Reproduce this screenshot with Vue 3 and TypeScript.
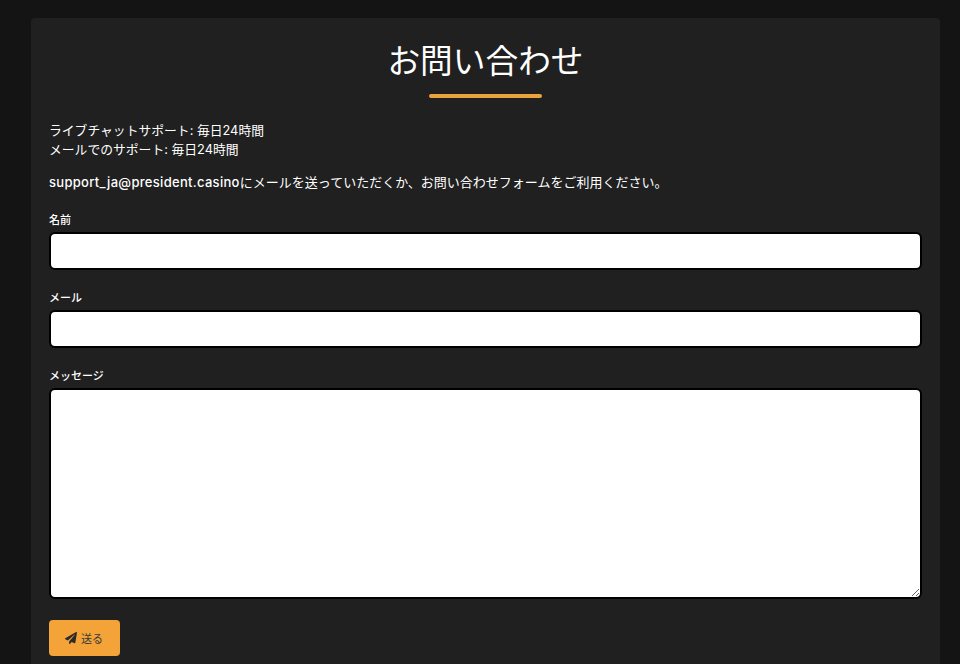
<script setup lang="ts">
const introLines: string[] = ['ライブチャットサポート: 毎日24時間', 'メールでのサポート: 毎日24時間']
</script>

<template>
  <main class="page">
    <section class="card">
      <h1 class="title">お問い合わせ</h1>
      <div class="rule"></div>
      <p class="intro">
        <template v-for="line in introLines" :key="line">{{ line }}<br /></template>
      </p>
      <p class="mailline"><span class="addr">support_ja@president.casino</span>にメールを送っていただくか、お問い合わせフォームをご利用ください。</p>
      <form class="form" @submit.prevent>
        <label class="field">
          <span class="label">名前</span>
          <input class="control input" type="text" />
        </label>
        <label class="field">
          <span class="label">メール</span>
          <input class="control input" type="email" />
        </label>
        <label class="field">
          <span class="label">メッセージ</span>
          <textarea class="control area"></textarea>
        </label>
        <button class="send" type="submit">
          <svg class="plane" viewBox="0 0 512 512" aria-hidden="true">
            <path d="M476 3.2 12.5 270.6c-18.1 10.400-15.800 35.600 2.200 43.200L121 358.400l287.300-253.200c5.500-4.900 13.300 2.600 8.600 8.300L176 407v80.500c0 23.600 28.500 32.900 42.500 15.800L282 426l124.600 52.200c14.200 6 30.400-2.900 33-18.200l72-432C515 7.800 493.300-6.800 476 3.200z" />
          </svg>
          <span>送る</span>
        </button>
      </form>
    </section>
  </main>
</template>

<style scoped>
.page {
  box-sizing: border-box;
  width: 960px;
  height: 664px;
  overflow: hidden;
  padding: 18px 20px 0 31px;
  background: #141414;
  font-family: "Inter", "Noto Sans CJK JP", sans-serif;
}
.card {
  box-sizing: border-box;
  width: 909px;
  height: 700px;
  padding: 16px 18px 0;
  background: #202020;
  border-radius: 4px 4px 0 0;
  color: #fff;
}
.title {
  margin: 0;
  height: 52px;
  font-size: 32.7px;
  line-height: 50px;
  font-weight: 400;
  text-align: center;
  font-family: "Noto Sans CJK JP", sans-serif;
}
.rule {
  width: 113px;
  height: 4px;
  margin: 8px auto 0;
  background: #eba33c;
  border-radius: 2px;
}
.intro {
  margin: 23px 0 0;
  font-size: 12.8px;
  line-height: 19px;
  font-weight: 400;
}
.mailline {
  margin: 14px 0 0;
  font-size: 13px;
  line-height: 19px;
  font-weight: 400;
}
.addr {
  font-weight: 500;
  letter-spacing: 0.3px;
}
.form {
  display: flex;
  flex-direction: column;
  align-items: flex-start;
  margin-top: 21px;
}
.field {
  display: flex;
  flex-direction: column;
  width: 100%;
  margin-bottom: 21px;
}
.label {
  height: 15px;
  margin-bottom: 4px;
  font-size: 11px;
  line-height: 15px;
  font-weight: 500;
}
.control {
  box-sizing: border-box;
  display: block;
  width: 873px;
  background: #fff;
  border: 2px solid #000;
  border-radius: 6px;
  margin: 0;
  padding: 6px 10px;
  outline: none;
  font: inherit;
}
.input {
  height: 38px;
}
.area {
  height: 211px;
  resize: vertical;
}
.send {
  display: flex;
  align-items: center;
  justify-content: center;
  gap: 4px;
  width: 71px;
  height: 36px;
  margin-top: 0;
  padding: 0 1px 0 0;
  background: #f4a338;
  border: 0;
  border-radius: 4px;
  color: #3a3a3a;
  font-family: inherit;
  font-size: 11px;
}
.plane {
  width: 12px;
  height: 12px;
  fill: #2a2a2a;
}
</style>
